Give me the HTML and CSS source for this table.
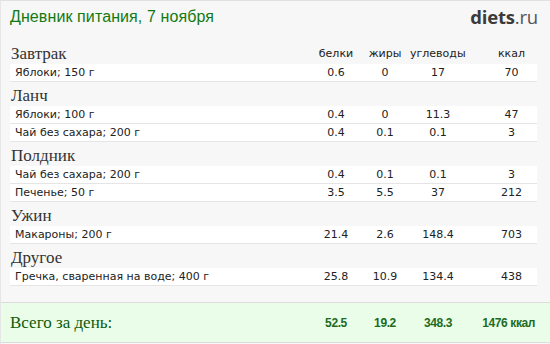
FILE: index.html
```html
<!DOCTYPE html>
<html lang="ru">
<head>
<meta charset="utf-8">
<title>Дневник питания</title>
<link rel="stylesheet" href="styles.css">
</head>
<body>
<div class="page">
  <div class="top">
    <div class="title">Дневник питания, 7 ноября</div>
    <div class="logo"><b>diets</b>.ru</div>
  </div>

  <div class="heading first">
    <span class="meal">Завтрак</span>
    <span class="col c1">белки</span>
    <span class="col c2">жиры</span>
    <span class="col c3">углеводы</span>
    <span class="col c4">ккал</span>
  </div>
  <div class="row"><span class="name">Яблоки; 150 г</span><span>0.6</span><span>0</span><span>17</span><span class="kc">70</span></div>

  <div class="heading"><span class="meal">Ланч</span></div>
  <div class="row"><span class="name">Яблоки; 100 г</span><span>0.4</span><span>0</span><span>11.3</span><span class="kc">47</span></div>
  <div class="row"><span class="name">Чай без сахара; 200 г</span><span>0.4</span><span>0.1</span><span>0.1</span><span class="kc">3</span></div>

  <div class="heading"><span class="meal">Полдник</span></div>
  <div class="row"><span class="name">Чай без сахара; 200 г</span><span>0.4</span><span>0.1</span><span>0.1</span><span class="kc">3</span></div>
  <div class="row"><span class="name">Печенье; 50 г</span><span>3.5</span><span>5.5</span><span>37</span><span class="kc">212</span></div>

  <div class="heading"><span class="meal">Ужин</span></div>
  <div class="row"><span class="name">Макароны; 200 г</span><span>21.4</span><span>2.6</span><span>148.4</span><span class="kc">703</span></div>

  <div class="heading"><span class="meal">Другое</span></div>
  <div class="row"><span class="name">Гречка, сваренная на воде; 400 г</span><span>25.8</span><span>10.9</span><span>134.4</span><span class="kc">438</span></div>

  <div class="total">
    <span class="tlabel">Всего за день:</span>
    <span>52.5</span><span>19.2</span><span>348.3</span><span class="tkc">1476 ккал</span>
  </div>
</div>
</body>
</html>
```

FILE: styles.css
```css
html, body {
  margin: 0;
  padding: 0;
}
body {
  background: #f7f7f7;
  width: 550px;
  height: 344px;
  overflow: hidden;
}
.page {
  width: 550px;
  height: 344px;
  box-sizing: border-box;
  border-top: 1px solid #e1e1e1;
  border-left: 1px solid #e6e6e6;
  background: #f7f7f7;
}
.top {
  display: flex;
  justify-content: space-between;
  align-items: flex-start;
  height: 39px;
  box-sizing: border-box;
  padding: 6px 12px 0 9px;
}
.title {
  font-family: "Liberation Sans", Arial, sans-serif;
  font-size: 16px;
  line-height: 20px;
  letter-spacing: 0.1px;
  color: #117a11;
}
.logo {
  font-family: "Open Sans", "Liberation Sans", sans-serif;
  font-size: 18.5px;
  line-height: 20px;
  color: #555;
  letter-spacing: -0.2px;
}
.logo b {
  font-weight: 700;
  color: #3b3b3b;
}
.heading {
  display: grid;
  grid-template-columns: 1fr 48px 50px 56px 71px;
  width: 527px;
  margin-left: 9px;
  height: 24px;
  box-sizing: border-box;
  padding-top: 4px;
  align-items: end;
}
.meal {
  font-family: "Liberation Serif", "Times New Roman", serif;
  font-size: 17px;
  line-height: 20px;
  color: #333;
  padding-left: 1px;
}
.col {
  font-family: "DejaVu Sans", Verdana, sans-serif;
  font-size: 11px;
  line-height: 16px;
  color: #222;
  text-align: center;
  padding-bottom: 2px;
}
.c3 { padding-right: 12px; }
.c4 { padding-left: 20px; }
.row {
  display: grid;
  grid-template-columns: 1fr 48px 50px 56px 71px;
  width: 527px;
  margin-left: 9px;
  height: 18px;
  box-sizing: border-box;
  background: #fff;
  border-bottom: 1px solid #e5e5e5;
  font-family: "DejaVu Sans", Verdana, sans-serif;
  font-size: 11px;
  line-height: 17px;
  color: #222;
}
.row span {
  text-align: center;
}
.row .name {
  text-align: left;
  padding-left: 5px;
}
.row .kc {
  padding-left: 20px;
}
.total {
  display: grid;
  grid-template-columns: 1fr 48px 50px 56px 71px;
  margin-top: 16px;
  height: 41px;
  box-sizing: border-box;
  border-top: 1px solid #dcdcdc;
  border-bottom: 1px solid #dcdcdc;
  background: #e9fde9;
  padding: 0 13px 0 9px;
  align-items: center;
  font-family: "Liberation Sans", Arial, sans-serif;
  font-weight: 700;
  font-size: 12px;
  letter-spacing: -0.4px;
  color: #1f6b1f;
}
.total span {
  text-align: center;
}
.total .tlabel {
  text-align: left;
  font-family: "Liberation Serif", "Times New Roman", serif;
  font-weight: 400;
  font-size: 17px;
  letter-spacing: 0;
  color: #0d5a0d;
}
.total .tkc {
  text-align: right;
  padding-right: 2px;
}
```
